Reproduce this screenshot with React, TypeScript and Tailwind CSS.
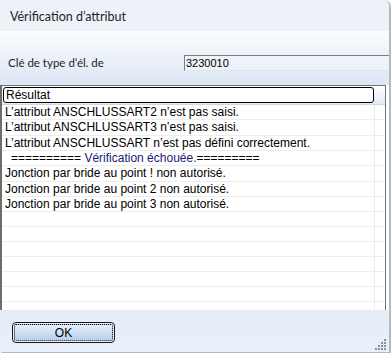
import React from "react";

const rows = [
  "L\u2019attribut ANSCHLUSSART2 n\u2019est pas saisi.",
  "L\u2019attribut ANSCHLUSSART3 n\u2019est pas saisi.",
  "L\u2019attribut ANSCHLUSSART n\u2019est pas d\u00e9fini correctement.",
  "SEP",
  "Jonction par bride au point ! non autoris\u00e9.",
  "Jonction par bride au point 2 non autoris\u00e9.",
  "Jonction par bride au point 3 non autoris\u00e9.",
];

export default function App() {
  const empties = Array.from({ length: 7 });
  return (
    <div className="w-[391px] h-[353px] bg-white overflow-hidden">
      <div
        className="w-[391px] h-[353px] flex flex-col border-r-2 border-b border-[#b4b9bf] rounded-tr-[7px] rounded-bl-[3px] overflow-hidden"
        style={{ fontFamily: '"Liberation Sans", Arial, sans-serif' }}
      >
        {/* title bar */}
        <div
          className="h-[31px] shrink-0 bg-[#edf2f8] flex items-center pt-[3px] pl-[10px] text-[12.5px] text-[#1e1e1e]"
          style={{ fontFamily: 'Lato, "Open Sans", sans-serif' }}
        >
          Vérification d’attribut
        </div>
        {/* top form */}
        <div className="h-[54px] shrink-0 bg-gradient-to-b from-[#fbfcfe] to-[#dce6f3] flex items-start pt-[24px]">
          <div
            className="w-[184px] pl-[8px] text-[11.5px] text-[#1e1e1e] leading-[16px]"
            style={{ fontFamily: 'Lato, "Open Sans", sans-serif' }}
          >
            Clé de type d’él. de
          </div>
          <div className="flex-1 h-[16px] border-t border-l border-[#7b7b7b] border-b border-b-[#dfe5ec] bg-[#eef3f9] text-[11px] leading-[14px] pl-[1px] text-black">
            3230010
          </div>
        </div>
        {/* list */}
        <div className="flex-1 flex">
          <div className="w-[386px] h-[225px] border-t border-l-2 border-r border-[#6f747b] border-l-[#6d6d6d] bg-white overflow-hidden">
            <div className="h-[19px] flex border-b border-[#d5d5d5] bg-gradient-to-b from-white to-[#e3ebf5]">
              <div className="w-[371px] ml-[1px] mt-[1px] h-[16px] border border-black rounded-[3px] bg-white text-[12px] leading-[14px] pl-[2px] text-black">
                Résultat
              </div>
            </div>
            {rows.map((r, i) => (
              <div key={i} className="h-[15.33px] flex border-b border-[#ededed]">
                <div className="w-[373px] border-r border-[#ededed] text-[12px] leading-[14px] pl-[3px] text-black whitespace-nowrap">
                  {r === "SEP" ? (
                    <span className="pl-[6px]">
                      ========== <span className="text-[#1a1a78]">Vérification échouée.</span>=========
                    </span>
                  ) : (
                    r
                  )}
                </div>
              </div>
            ))}
            {empties.map((_, i) => (
              <div key={"e" + i} className="h-[15px] flex border-b border-[#ededed]">
                <div className="w-[373px] border-r border-[#ededed]" />
              </div>
            ))}
          </div>
        </div>
        {/* footer */}
        <div className="h-[43px] shrink-0 bg-gradient-to-b from-[#e5ecf7] to-[#eaf0fa] relative pt-[12px] pl-[12px]">
          <div className="w-[103px] h-[21px] rounded-[4px] border border-[#1a1a1a] p-[1px]">
            <div className="w-full h-full rounded-[2px] border border-dotted border-black bg-gradient-to-b from-[#e6eefa] to-[#b9cfec] flex items-center justify-center text-[12px] text-black">
              OK
            </div>
          </div>
          <svg className="absolute right-[2px] bottom-[2px]" width="12" height="12" viewBox="0 0 12 12">
            {[
              [9, 0],
              [6, 3],
              [9, 3],
              [3, 6],
              [6, 6],
              [9, 6],
              [0, 9],
              [3, 9],
              [6, 9],
              [9, 9],
            ].map(([x, y], i) => (
              <rect key={i} x={x} y={y} width="2" height="2" fill="#8a8f96" />
            ))}
          </svg>
        </div>
      </div>
    </div>
  );
}
